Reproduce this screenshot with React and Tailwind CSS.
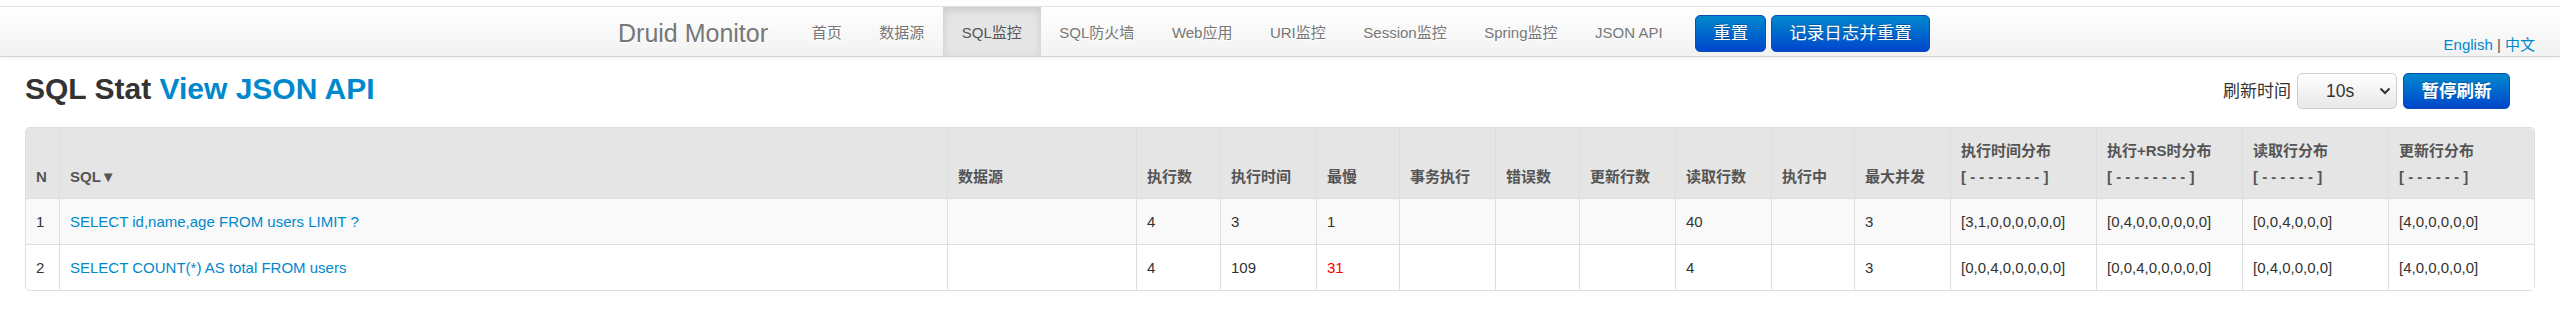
const NAV_ITEMS = [
  { label: '首页' },
  { label: '数据源' },
  { label: 'SQL监控', active: true },
  { label: 'SQL防火墙' },
  { label: 'Web应用' },
  { label: 'URI监控' },
  { label: 'Session监控' },
  { label: 'Spring监控' },
  { label: 'JSON API' },
]

const COL_WIDTHS = [
  'w-[34px]', 'w-[888px]', 'w-[189px]', 'w-[84px]', 'w-[96px]', 'w-[83px]', 'w-[96px]', 'w-[84px]',
  'w-[96px]', 'w-[96px]', 'w-[83px]', 'w-[96px]', 'w-[146px]', 'w-[146px]', 'w-[146px]', 'w-[146px]',
]

const HEADERS = [
  ['N'],
  ['SQL▼'],
  ['数据源'],
  ['执行数'],
  ['执行时间'],
  ['最慢'],
  ['事务执行'],
  ['错误数'],
  ['更新行数'],
  ['读取行数'],
  ['执行中'],
  ['最大并发'],
  ['执行时间分布', '[ - - - - - - - - ]'],
  ['执行+RS时分布', '[ - - - - - - - - ]'],
  ['读取行分布', '[ - - - - - - ]'],
  ['更新行分布', '[ - - - - - - ]'],
]

const ROWS = [
  {
    n: 1,
    sql: 'SELECT id,name,age FROM users LIMIT ?',
    cells: ['', '4', '3', '1', '', '', '', '40', '', '3', '[3,1,0,0,0,0,0,0]', '[0,4,0,0,0,0,0,0]', '[0,0,4,0,0,0]', '[4,0,0,0,0,0]'],
  },
  {
    n: 2,
    sql: 'SELECT COUNT(*) AS total FROM users',
    cells: ['', '4', '109', '31', '', '', '', '4', '', '3', '[0,0,4,0,0,0,0,0]', '[0,0,4,0,0,0,0,0]', '[0,4,0,0,0,0]', '[4,0,0,0,0,0]'],
    slowRed: true,
  },
]

function NavBar() {
  return (
    <div className="h-[51px] border-y border-t-[#e3e3e3] border-b-[#d4d4d4] bg-linear-to-b from-white to-[#f2f2f2] shadow-[0_1px_4px_rgba(0,0,0,0.065)]">
      <div className="flex h-[49px] pl-[593px]">
        <div className="px-[25px] pt-[11px] text-[25px] leading-[30px] text-[#777] [text-shadow:0_1px_0_#fff]">
          Druid Monitor
        </div>
        {NAV_ITEMS.map((item) =>
          item.active ? (
            <div
              key={item.label}
              className="h-[49px] px-[18.75px] pt-[12.5px] leading-[25px] text-[#555] bg-[#e5e5e5] shadow-[inset_0_3px_8px_rgba(0,0,0,0.125)]"
            >
              {item.label}
            </div>
          ) : (
            <div key={item.label} className="px-[18.75px] pt-[12.5px] leading-[25px] text-[#777] [text-shadow:0_1px_0_#fff]">
              {item.label}
            </div>
          )
        )}
        <div className="ml-[14px] flex gap-[5px] pt-[8px]">
          <button className="flex h-[37px] items-center rounded-[5px] border border-[#0a4fb8] bg-linear-to-b from-[#0088cc] to-[#0044cc] px-[17px] text-[17.5px] leading-[25px] text-white [text-shadow:0_-1px_0_rgba(0,0,0,0.25)]">
            重置
          </button>
          <button className="flex h-[37px] items-center rounded-[5px] border border-[#0a4fb8] bg-linear-to-b from-[#0088cc] to-[#0044cc] px-[17px] text-[17.5px] leading-[25px] text-white [text-shadow:0_-1px_0_rgba(0,0,0,0.25)]">
            记录日志并重置
          </button>
        </div>
      </div>
    </div>
  )
}

export default function App() {
  return (
    <div className="min-h-[326px] bg-white text-[15px] text-[#333] font-['Liberation_Sans','Noto_Sans_CJK_SC',sans-serif]">
      <div className="relative pt-[6px]">
        <NavBar />
        {/* language switch sits over the bar's lower right */}
        <div className="absolute right-[25px] top-[35px] leading-[20px]">
          <a className="text-[#0088cc]">English</a>
          <span className="text-[#555]"> | </span>
          <a className="text-[#0088cc]">中文</a>
        </div>
      </div>

      <div className="px-[25px]">
        <div className="mt-[16px] flex items-start justify-between">
          <h3 className="-mt-[2px] text-[30px] font-bold leading-[36px] text-[#333]">
            SQL Stat <a className="text-[#0088cc]">View JSON API</a>
          </h3>
          <div className="mr-[25px] flex items-center gap-[6px]">
            <span className="text-[17px] leading-[25px]">刷新时间</span>
            <div className="flex h-[36px] w-[100px] items-center justify-between rounded-[5px] border border-[#ccc] bg-linear-to-b from-white to-[#e8e8e8] pl-[28px] pr-[5px] text-[17.5px]">
              <span>10s</span>
              <svg width="12" height="8" viewBox="0 0 12 8" fill="none">
                <path d="M1.5 1.5 L6 6 L10.5 1.5" stroke="#333" strokeWidth="2" />
              </svg>
            </div>
            <button className="flex h-[36px] items-center rounded-[5px] border border-[#0a4fb8] bg-linear-to-b from-[#0088cc] to-[#0044cc] px-[17.5px] text-[17.5px] font-bold text-white [text-shadow:0_-1px_0_rgba(0,0,0,0.25)]">
              暂停刷新
            </button>
          </div>
        </div>

        <table className="mt-[18px] w-[2510px] table-fixed border-separate border-spacing-0 rounded-[5px] border border-l-0 border-[#ddd]">
          <colgroup>
            {COL_WIDTHS.map((w, i) => (
              <col key={i} className={w} />
            ))}
          </colgroup>
          <thead>
            <tr>
              {HEADERS.map((h, i) => (
                <th
                  key={i}
                  className={`border-l border-[#ddd] bg-[#e5e5e5] px-[10px] pt-[10px] pb-[8px] text-left align-bottom font-bold leading-[26px] whitespace-nowrap text-[#555] ${
                    i === 0 ? 'rounded-tl-[5px]' : ''
                  } ${i === HEADERS.length - 1 ? 'rounded-tr-[5px]' : ''}`}
                >
                  {h[0]}
                  {h[1] && (
                    <>
                      <br />
                      {h[1]}
                    </>
                  )}
                </th>
              ))}
            </tr>
          </thead>
          <tbody>
            {ROWS.map((row, ri) => (
              <tr key={row.n} className={ri % 2 === 0 ? 'bg-[#f9f9f9]' : 'bg-white'}>
                <td className={`border-l border-t border-[#ddd] p-[10px] leading-[25px] ${ri === ROWS.length - 1 ? 'rounded-bl-[5px]' : ''}`}>
                  {row.n}
                </td>
                <td className="border-l border-t border-[#ddd] p-[10px] leading-[25px] whitespace-nowrap">
                  <a className="text-[#0088cc]">{row.sql}</a>
                </td>
                {row.cells.map((c, ci) => (
                  <td
                    key={ci}
                    className={`border-l border-t border-[#ddd] p-[10px] leading-[25px] whitespace-nowrap ${
                      ci === 3 && row.slowRed ? 'text-[#ff0000]' : ''
                    }`}
                  >
                    {c}
                  </td>
                ))}
              </tr>
            ))}
          </tbody>
        </table>
      </div>
    </div>
  )
}
